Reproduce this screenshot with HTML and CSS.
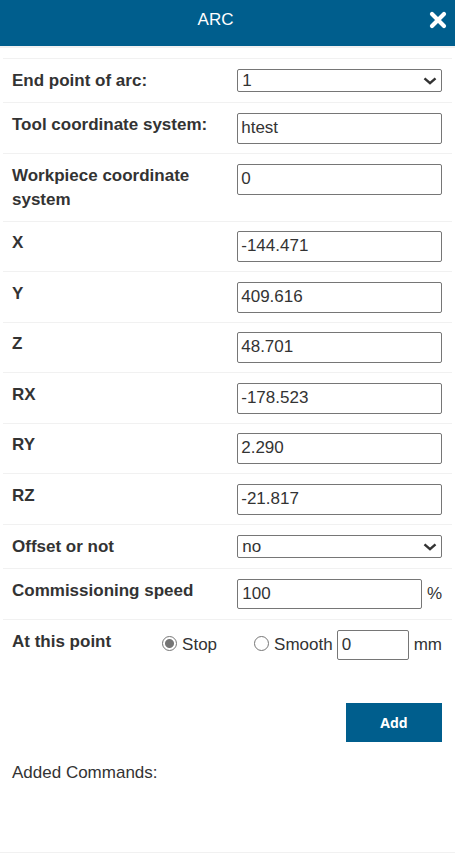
FILE: index.html
```html
<!DOCTYPE html>
<html lang="en">
<head>
<meta charset="utf-8">
<meta name="viewport" content="width=device-width, initial-scale=1">
<title>ARC</title>
<link rel="stylesheet" href="styles.css">
</head>
<body>
<header class="titlebar">
  <h1 class="title">ARC</h1>
  <button class="close" type="button" aria-label="Close">
    <svg width="18" height="18" viewBox="0 0 18 18" aria-hidden="true"><path d="M3 3 15 15M15 3 3 15"/></svg>
  </button>
</header>
<main>
  <form class="form">
    <div class="row">
      <label class="label" for="end-point">End point of arc:</label>
      <div class="select">
        <select id="end-point"><option>1</option></select>
        <svg class="chevron" width="14" height="8" viewBox="0 0 14 8" aria-hidden="true"><path d="M1.5 1.3 7 6.2 12.5 1.3"/></svg>
      </div>
    </div>
    <div class="row">
      <label class="label" for="tool">Tool coordinate system:</label>
      <input class="field" id="tool" type="text" value="htest">
    </div>
    <div class="row">
      <label class="label" for="workpiece">Workpiece coordinate system</label>
      <input class="field" id="workpiece" type="text" value="0">
    </div>
    <div class="axes">
      <div class="row"><label class="label" for="x">X</label><input class="field" id="x" type="text" value="-144.471"></div>
      <div class="row"><label class="label" for="y">Y</label><input class="field" id="y" type="text" value="409.616"></div>
      <div class="row"><label class="label" for="z">Z</label><input class="field" id="z" type="text" value="48.701"></div>
      <div class="row"><label class="label" for="rx">RX</label><input class="field" id="rx" type="text" value="-178.523"></div>
      <div class="row"><label class="label" for="ry">RY</label><input class="field" id="ry" type="text" value="2.290"></div>
      <div class="row"><label class="label" for="rz">RZ</label><input class="field" id="rz" type="text" value="-21.817"></div>
    </div>
    <div class="row">
      <label class="label" for="offset">Offset or not</label>
      <div class="select">
        <select id="offset"><option>no</option></select>
        <svg class="chevron" width="14" height="8" viewBox="0 0 14 8" aria-hidden="true"><path d="M1.5 1.3 7 6.2 12.5 1.3"/></svg>
      </div>
    </div>
    <div class="row">
      <label class="label" for="speed">Commissioning speed</label>
      <div class="with-unit">
        <input class="field roomy" id="speed" type="text" value="100">
        <span>%</span>
      </div>
    </div>
    <div class="row point" role="radiogroup" aria-labelledby="point-label">
      <span class="label" id="point-label">At this point</span>
      <label class="choice"><input type="radio" name="point" checked>Stop</label>
      <div class="smooth">
        <label class="choice"><input type="radio" name="point">Smooth</label>
        <div class="with-unit">
          <input class="field roomy short" type="text" value="0" aria-label="Smooth radius in mm">
          <span>mm</span>
        </div>
      </div>
    </div>
    <div class="actions"><button class="add" type="button">Add</button></div>
  </form>
  <section class="commands">Added Commands:</section>
</main>
</body>
</html>
```
FILE: styles.css
```css
* {
  box-sizing: border-box;
}

body {
  margin: 0;
  background: #fff;
  color: #333;
  font-family: "Liberation Sans", Arial, sans-serif;
  font-size: 17px;
  line-height: 24px;
}

input,
select {
  margin: 0;
  font: inherit;
  color: inherit;
}

.titlebar {
  display: grid;
  grid-template-columns: 1fr auto 1fr;
  align-items: center;
  height: 48px;
  padding: 0 8px 6px 0;
  background: #005e8d;
  border-bottom: 2px solid #f1f1f1;
  color: #fff;
}

.title {
  grid-column: 2;
  margin: 0 0 0 -16px;
  font-size: 17px;
  font-weight: 400;
}

.close {
  justify-self: end;
  display: flex;
  padding: 0;
  border: 0;
  background: none;
}

.close path {
  fill: none;
  stroke: #fff;
  stroke-width: 4.2;
  stroke-linecap: round;
}

.form {
  padding: 10px 3px 0;
}

.row {
  display: grid;
  grid-template-columns: 11fr 10fr;
  align-items: start;
  padding: 10px 10px 9px 9px;
  border-top: 1px solid #f1f1f1;
}

.axes .row:nth-child(odd) {
  padding-top: 9px;
}

.label {
  padding-right: 12px;
  font-weight: 700;
}

.field {
  width: 100%;
  min-width: 0;
  height: 31px;
  padding: 0 3px 1px;
  border: 1px solid #767676;
  border-radius: 2px;
  background: #fff;
}

.field.roomy {
  height: 30px;
  padding: 0 4px;
}

.select {
  position: relative;
}

.select select {
  display: block;
  width: 100%;
  height: 23px;
  padding: 0 24px 0 4px;
  appearance: none;
  border: 1px solid #767676;
  border-radius: 2px;
  background: #fff;
  line-height: 21px;
}

.chevron {
  position: absolute;
  top: 8px;
  right: 5px;
  pointer-events: none;
}

.chevron path {
  fill: none;
  stroke: #333;
  stroke-width: 2.4;
}

.with-unit {
  display: flex;
  align-items: center;
  gap: 5px;
  padding-bottom: 1px;
}

.point {
  display: flex;
  align-items: flex-start;
}

.point .label {
  flex: 1;
}

.choice {
  display: flex;
  align-items: center;
  gap: 5px;
  padding-top: 3px;
}

.choice input {
  width: 15px;
  height: 15px;
  margin-bottom: 3px;
  appearance: none;
  border: 1px solid #767676;
  border-radius: 50%;
  background: #fff;
}

.choice input:checked {
  background: radial-gradient(circle, #767676 4px, #fff 5px);
}

.smooth {
  display: flex;
  align-items: flex-start;
  gap: 4px;
  margin-left: 37px;
}

.short {
  width: 72px;
}

.actions {
  display: flex;
  justify-content: flex-end;
  padding: 33px 10px 0;
}

.add {
  width: 96px;
  height: 39px;
  padding: 0;
  border: 0;
  background: #005e8d;
  color: #fff;
  font: 700 14px/20px "Open Sans", sans-serif;
}

.commands {
  min-height: 111px;
  padding: 19px 12px;
  border-bottom: 1px solid #f1f1f1;
}
```
